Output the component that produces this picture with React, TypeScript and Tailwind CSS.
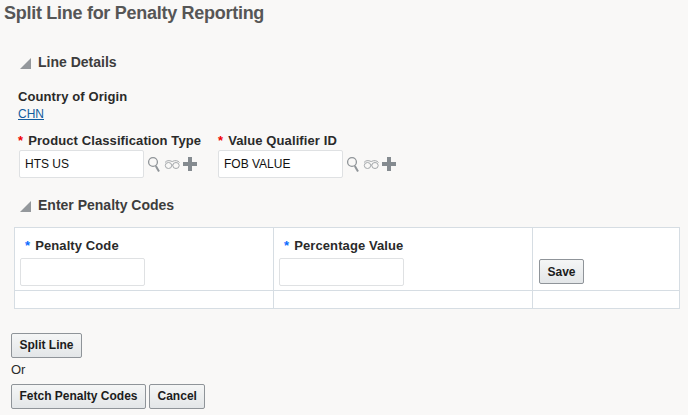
import React from 'react';

const Req: React.FC<{ blue?: boolean }> = ({ blue }) => (
  <span className={blue ? 'text-[#0b6cff] mr-[5px]' : 'text-[#f00000] mr-[5px]'}>*</span>
);

const LovIcons: React.FC = () => (
  <div className="flex items-center ml-[3px]">
    <svg width="14" height="20" viewBox="0 0 14 20" fill="none" stroke="#8f9498">
      <circle cx="6" cy="8" r="4.4" strokeWidth="1.3" />
      <path d="M8.800 12l3.200 5.500" strokeWidth="2" />
    </svg>
    <svg width="17" height="14" viewBox="0 0 17 14" fill="none" stroke="#a4a8ab" strokeWidth="1" className="ml-[3px]">
      <ellipse cx="4.500" cy="8.500" rx="3.200" ry="3" />
      <ellipse cx="12" cy="8.500" rx="3.200" ry="3" />
      <path d="M7.700 8h1.100M1 5.500C2.500 3.500 5 3 8.200 4.500 11 3 14 3.500 15.500 5.500" />
    </svg>
    <svg width="14" height="14" viewBox="0 0 14 14" fill="#858b90" className="ml-[2px]">
      <path d="M5 0h4v5h5v4H9v5H5V9H0V5h5z" />
    </svg>
  </div>
);

const Section: React.FC<{ title: string; className: string }> = ({ title, className }) => (
  <div className={`flex items-center text-[14px] leading-[18px] font-bold text-[#3d3d3d] ${className}`}>
    <svg width="11" height="11" viewBox="0 0 11 11" className="mr-[7px] mt-[3px]">
      <path d="M11 0v11H0z" fill="#94989c" />
    </svg>
    {title}
  </div>
);

const Btn: React.FC<{ label: string }> = ({ label }) => (
  <button className="h-[25px] px-[7.5px] rounded-[2px] border border-[#8f9499] bg-gradient-to-b from-[#f5f6f6] to-[#e3e6e8] text-[12px] font-bold text-[#1c1c1c]">
    {label}
  </button>
);

const inputCls = 'w-[125px] h-[28px] bg-white border border-[#dfe1e3] rounded-[2px] px-[5px] text-[12px] text-[#111] outline-none';
const labelCls = 'text-[13px] leading-[16px] font-bold text-[#2a2a2a] whitespace-nowrap tracking-[0.1px]';

export default function App() {
  return (
    <div className="w-[688px] h-[415px] overflow-hidden bg-[#f9f8f7] font-['Liberation_Sans',Arial,sans-serif]">
      <h1 className="pl-[4px] pt-[3px] text-[18px] leading-[21px] font-bold text-[#565656] tracking-[-0.28px]">
        Split Line for Penalty Reporting
      </h1>

      <Section title="Line Details" className="ml-[20px] mt-[29px]" />

      <div className={`ml-[18px] mt-[18px] ${labelCls}`}>Country of Origin</div>
      <a className="block ml-[18px] mt-[1px] text-[12px] leading-[16px] text-[#145c9e] underline">CHN</a>

      <div className="flex ml-[18px] mt-[11px]">
        <div className="w-[200px]">
          <div className={labelCls}><Req />Product Classification Type</div>
          <div className="flex items-center mt-[1px] pl-[1px]">
            <input className={inputCls} defaultValue="HTS US" readOnly />
            <LovIcons />
          </div>
        </div>
        <div>
          <div className={labelCls}><Req />Value Qualifier ID</div>
          <div className="flex items-center mt-[1px]">
            <input className={inputCls} defaultValue="FOB VALUE" readOnly />
            <LovIcons />
          </div>
        </div>
      </div>

      <Section title="Enter Penalty Codes" className="ml-[20px] mt-[18px]" />

      <table className="ml-[14px] mt-[13px] w-[666px] h-[81px] table-fixed border-collapse bg-white text-[13px] text-[#1c1c1c]">
        <colgroup>
          <col className="w-[259px]" />
          <col className="w-[259px]" />
          <col />
        </colgroup>
        <tbody>
          <tr className="h-[63px]">
            <td className="border border-[#d6dde3] pl-[5px] align-top pt-[10px]">
              <div className={`${labelCls} pl-[5px]`}><Req blue />Penalty Code</div>
              <input className={`${inputCls} mt-[4px] block`} readOnly />
            </td>
            <td className="border border-[#d6dde3] pl-[5px] align-top pt-[10px]">
              <div className={`${labelCls} pl-[5px]`}><Req blue />Percentage Value</div>
              <input className={`${inputCls} mt-[4px] block`} readOnly />
            </td>
            <td className="border border-[#d6dde3] pl-[6px] align-top pt-[31px]">
              <Btn label="Save" />
            </td>
          </tr>
          <tr className="h-[18px]">
            <td className="border border-[#d6dde3]" />
            <td className="border border-[#d6dde3]" />
            <td className="border border-[#d6dde3]" />
          </tr>
        </tbody>
      </table>

      <div className="ml-[11px] mt-[23px]">
        <Btn label="Split Line" />
        <div className="text-[13px] leading-[16px] text-[#2a2a2a] mt-[4px] mb-[6px]">Or</div>
        <div className="flex gap-[3px]">
          <Btn label="Fetch Penalty Codes" />
          <Btn label="Cancel" />
        </div>
      </div>
    </div>
  );
}
